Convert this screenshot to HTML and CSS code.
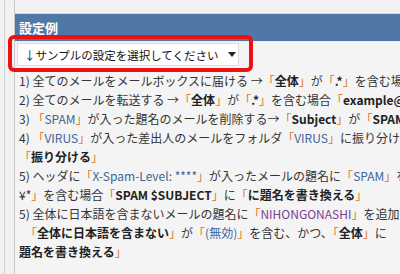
FILE: index.html
```html
<!DOCTYPE html>
<html>

<head>
  <meta charset="UTF-8">
  <link rel="stylesheet" href="styles.css">
</head>

<body>
  <div class="frame">
    <div class="panel">
      <div class="top-gap"></div>
      <div class="title-bar">設定例</div>
      <div class="content">
        <div class="select-row">
          <div class="select-box">
            <span>↓サンプルの設定を選択してください</span>
            <span class="caret"></span>
          </div>
          <div class="highlight"></div>
        </div>
        <p class="example">1) 全てのメールをメールボックスに届ける →<span class="q">「</span><b>全体</b><span class="q">」</span>が<span class="q">「</span><b>.*</b><span class="q">」</span>を含む場合<span class="q">「</span><b>example.jp</b><span class="q">」</span>に「振り分ける」</p>
        <p class="example">2) 全てのメールを転送する →<span class="q">「</span><b>全体</b><span class="q">」</span>が<span class="q">「</span><b>.*</b><span class="q">」</span>を含む場合<span class="q">「</span><b>example@example.jp</b><span class="q">」</span>に転送</p>
        <p class="example">3) <span class="q">「</span><span class="v">SPAM</span><span class="q">」</span>が入った題名のメールを削除する→<span class="q">「</span><b>Subject</b><span class="q">」</span>が<span class="q">「</span><b>SPAM</b><span class="q">」</span>を含む場合「削除」</p>
        <p class="example">4) <span class="q">「</span><span class="v">VIRUS</span><span class="q">」</span>が入った差出人のメールをフォルダ<span class="q">「</span><span class="v">VIRUS</span><span class="q">」</span>に振り分ける →「From」が<br><span class="q">「</span><b>振り分ける</b><span class="q">」</span></p>
        <p class="example">5) ヘッダに<span class="q">「</span><span class="v">X-Spam-Level: ****</span><span class="q">」</span>が入ったメールの題名に<span class="q">「</span><span class="v">SPAM</span><span class="q">」</span>を追加 →「ヘッダ」が「\*\*\*\*<br>¥*<span class="q">」</span>を含む場合<span class="q">「</span><b>SPAM $SUBJECT</b><span class="q">」</span>に<span class="q">「</span><b>に題名を書き換える</b><span class="q">」</span></p>
        <p class="example">5) 全体に日本語を含まないメールの題名に<span class="q">「</span><span class="p">NIHONGONASHI</span><span class="q">」</span>を追加 →「全体」が「[ぁ-ん]」<br>　<span class="q">「</span><b>全体に日本語を含まない</b><span class="q">」</span>が<span class="q">「</span><span class="v">(無効)</span><span class="q">」</span>を含む、かつ、<span class="q">「</span><b>全体</b><span class="q">」</span>に<br><b>題名を書き換える</b><span class="q">」</span></p>
      </div>
    </div>
  </div>
</body>

</html>
```

FILE: styles.css
```css
body {
  margin: 0;
  background-color: #f1f1f1;
  font-family: "Noto Sans CJK JP", "Liberation Sans", sans-serif;
  font-size: 12px;
  color: #333333;
  overflow: hidden;
}

.frame {
  margin-left: 4px;
  border-left: 1px solid #d2d2d2;
  padding-left: 9px;
  height: 274px;
}

.panel {
  border-left: 1px solid #c8c8c8;
  background-color: #f4f4f4;
  height: 274px;
}

.top-gap {
  height: 13px;
  border-bottom: 1px solid #d6d6d6;
  background-color: #f1f1f1;
}

.title-bar {
  height: 27px;
  line-height: 27px;
  padding-left: 4px;
  background-color: #4f78a6;
  border-bottom: 1px solid #d6eef8;
  color: #ffffff;
  font-size: 13px;
  font-weight: bold;
}

.content {
  padding: 1px 0 0 4px;
  white-space: nowrap;
}

.select-row {
  position: relative;
  width: 222px;
  margin: 0 0 5px -2px;
}

.select-box {
  display: flex;
  align-items: center;
  gap: 10px;
  height: 21px;
  padding: 0 6px 0 6px;
  background-color: #ffffff;
  border: 1px solid #dcdcdc;
  font-size: 11.5px;
  color: #111111;
}

.caret {
  width: 0;
  height: 0;
  margin-left: auto;
  border-left: 4px solid transparent;
  border-right: 4px solid transparent;
  border-top: 5px solid #222222;
}

.highlight {
  position: absolute;
  top: -8px;
  left: -9px;
  width: 237px;
  height: 29px;
  border: 4px solid #ee1111;
  border-radius: 6px;
}

.example {
  margin: 0;
  line-height: 19px;
}

.example b {
  color: #222222;
}

.q {
  color: #d8781e;
}

.v {
  color: #3f6594;
}

.p {
  color: #7a3f8f;
}
```
